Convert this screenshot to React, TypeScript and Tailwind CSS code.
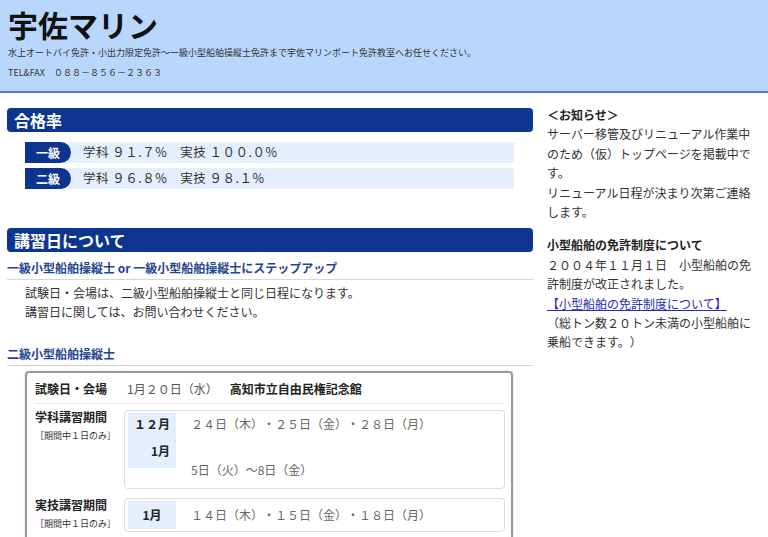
const rates = [
  { grade: "一級", text: "学科 ９１.７%　実技 １００.０%" },
  { grade: "二級", text: "学科 ９６.８%　実技 ９８.１%" },
];

function BarHeading({ children }: { children: React.ReactNode }) {
  return (
    <h2 className="h-[24px] rounded-[4px] bg-[#0c3590] pl-[7px] text-[16px] font-bold leading-[24px] text-white">
      {children}
    </h2>
  );
}

function SubHeading({ children }: { children: React.ReactNode }) {
  return (
    <h3 className="border-b border-[#d6d6d6] pt-[7px] pb-[2px] text-[12px] font-bold leading-[18px] text-[#1f4490]">
      {children}
    </h3>
  );
}

function PeriodLabel({ title }: { title: string }) {
  return (
    <div className="w-[89px] shrink-0">
      <p className="text-[12px] font-bold leading-[14px] text-[#222]">{title}</p>
      <p className="mt-[5px] text-[9px] leading-[14px] text-[#333]">［期間中１日のみ］</p>
    </div>
  );
}

export default function App() {
  return (
    <div className="min-h-screen bg-white font-['Noto_Sans_CJK_JP','Noto_Sans',sans-serif] text-[#333] [text-spacing-trim:space-all]">
      <header className="h-[93px] border-b-2 border-[#5b7cbd] bg-[#b9d7fc] px-2 pt-[6px]">
        <h1 className="text-[30px] font-bold leading-[36px] text-[#111]">宇佐マリン</h1>
        <p className="mt-[4px] whitespace-nowrap text-[9px] leading-[14px] text-[#333]">
          水上オートバイ免許・小出力限定免許～一級小型船舶操縦士免許まで宇佐マリンボート免許教室へお任せください。
        </p>
        <p className="mt-[6px] text-[9px] leading-[14px] text-[#333]">TEL&amp;FAX　０８８－８５６－２３６３</p>
      </header>

      <main className="flex pl-[7px] pt-[12px]">
        <div className="w-[526px] shrink-0 pt-[3px]">
          <BarHeading>合格率</BarHeading>
          <div className="mt-[10px] ml-[18px] flex w-[489px] flex-col gap-[5px]">
            {rates.map((r) => (
              <div key={r.grade} className="flex h-[21px] items-center rounded-[3px] bg-[#e5eefc]">
                <span className="flex h-full w-[46px] items-center justify-center rounded-l-[3px] rounded-r-full bg-[#0c3590] text-[12px] font-bold text-white">
                  {r.grade}
                </span>
                <span className="ml-[12px] text-[12.5px] tracking-[0.5px] text-[#333]">{r.text}</span>
              </div>
            ))}
          </div>

          <div className="mt-[39px]">
            <BarHeading>講習日について</BarHeading>
          </div>
          <SubHeading>一級小型船舶操縦士 or 一級小型船舶操縦士にステップアップ</SubHeading>
          <div className="mt-[3px] pl-[18px] text-[12px] leading-[19px] text-[#333]">
            <p>試験日・会場は、二級小型船舶操縦士と同じ日程になります。</p>
            <p>講習日に関しては、お問い合わせください。</p>
          </div>

          <div className="mt-[17px]">
            <SubHeading>二級小型船舶操縦士</SubHeading>
          </div>
          <div className="mt-[5px] ml-[18px] w-[488px] rounded-[4px] border-2 border-[#999] pl-[8px] pr-[6px] pb-[10px] shadow-[0_0_2px_rgba(0,0,0,0.2)]">
            <div className="flex items-center border-b border-[#ececec] pt-[6px] pb-[4px] text-[12px] leading-[20px]">
              <span className="w-[92px] shrink-0 font-bold text-[#222]">試験日・会場</span>
              <span className="text-[#555]">1月２０日（水）</span>
              <span className="ml-[12px] font-bold text-[#222]">高知市立自由民権記念館</span>
            </div>

            <div className="flex pt-[6px]">
              <PeriodLabel title="学科講習期間" />
              <div className="flex h-[79px] flex-1 rounded-[4px] border border-[#dcdcdc] px-[3px] pt-[2px]">
                <div className="h-[55px] w-[48px] shrink-0 bg-[#e5eefc] pr-[6px] text-right text-[12px] font-bold text-[#222]">
                  <p className="leading-[22px]">１２月</p>
                  <p className="mt-[5px] leading-[22px]">1月</p>
                </div>
                <div className="pl-[15px] text-[12px] text-[#666]">
                  <p className="leading-[22px]">２４日（木）・２５日（金）・２８日（月）</p>
                  <p className="mt-[24px] leading-[22px]">5日（火）～8日（金）</p>
                </div>
              </div>
            </div>

            <div className="mt-[9px] flex">
              <PeriodLabel title="実技講習期間" />
              <div className="flex h-[34px] flex-1 items-center rounded-[4px] border border-[#dcdcdc] px-[3px]">
                <div className="flex h-[28px] w-[48px] shrink-0 items-center justify-center bg-[#e5eefc] text-[12px] font-bold text-[#222]">
                  1月
                </div>
                <p className="pl-[15px] text-[12px] text-[#666]">１４日（木）・１５日（金）・１８日（月）</p>
              </div>
            </div>
          </div>
        </div>

        <aside className="ml-[14px] w-[210px] text-[12px] leading-[19.4px] text-[#333]">
          <p className="font-bold text-[#222]">＜お知らせ＞</p>
          <p className="whitespace-nowrap">サーバー移管及びリニューアル作業中</p>
          <p className="whitespace-nowrap">のため（仮）トップページを掲載中で</p>
          <p>す。</p>
          <p className="whitespace-nowrap">リニューアル日程が決まり次第ご連絡</p>
          <p>します。</p>

          <p className="mt-[14px] font-bold text-[#222]">小型船舶の免許制度について</p>
          <p className="whitespace-nowrap">２００４年１１月１日　小型船舶の免</p>
          <p>許制度が改正されました。</p>
          <p>
            <a href="#" className="text-[#2a2ab8] underline">【小型船舶の免許制度について】</a>
          </p>
          <p className="whitespace-nowrap">（総トン数２０トン未満の小型船舶に</p>
          <p>乗船できます。）</p>
        </aside>
      </main>
    </div>
  );
}
